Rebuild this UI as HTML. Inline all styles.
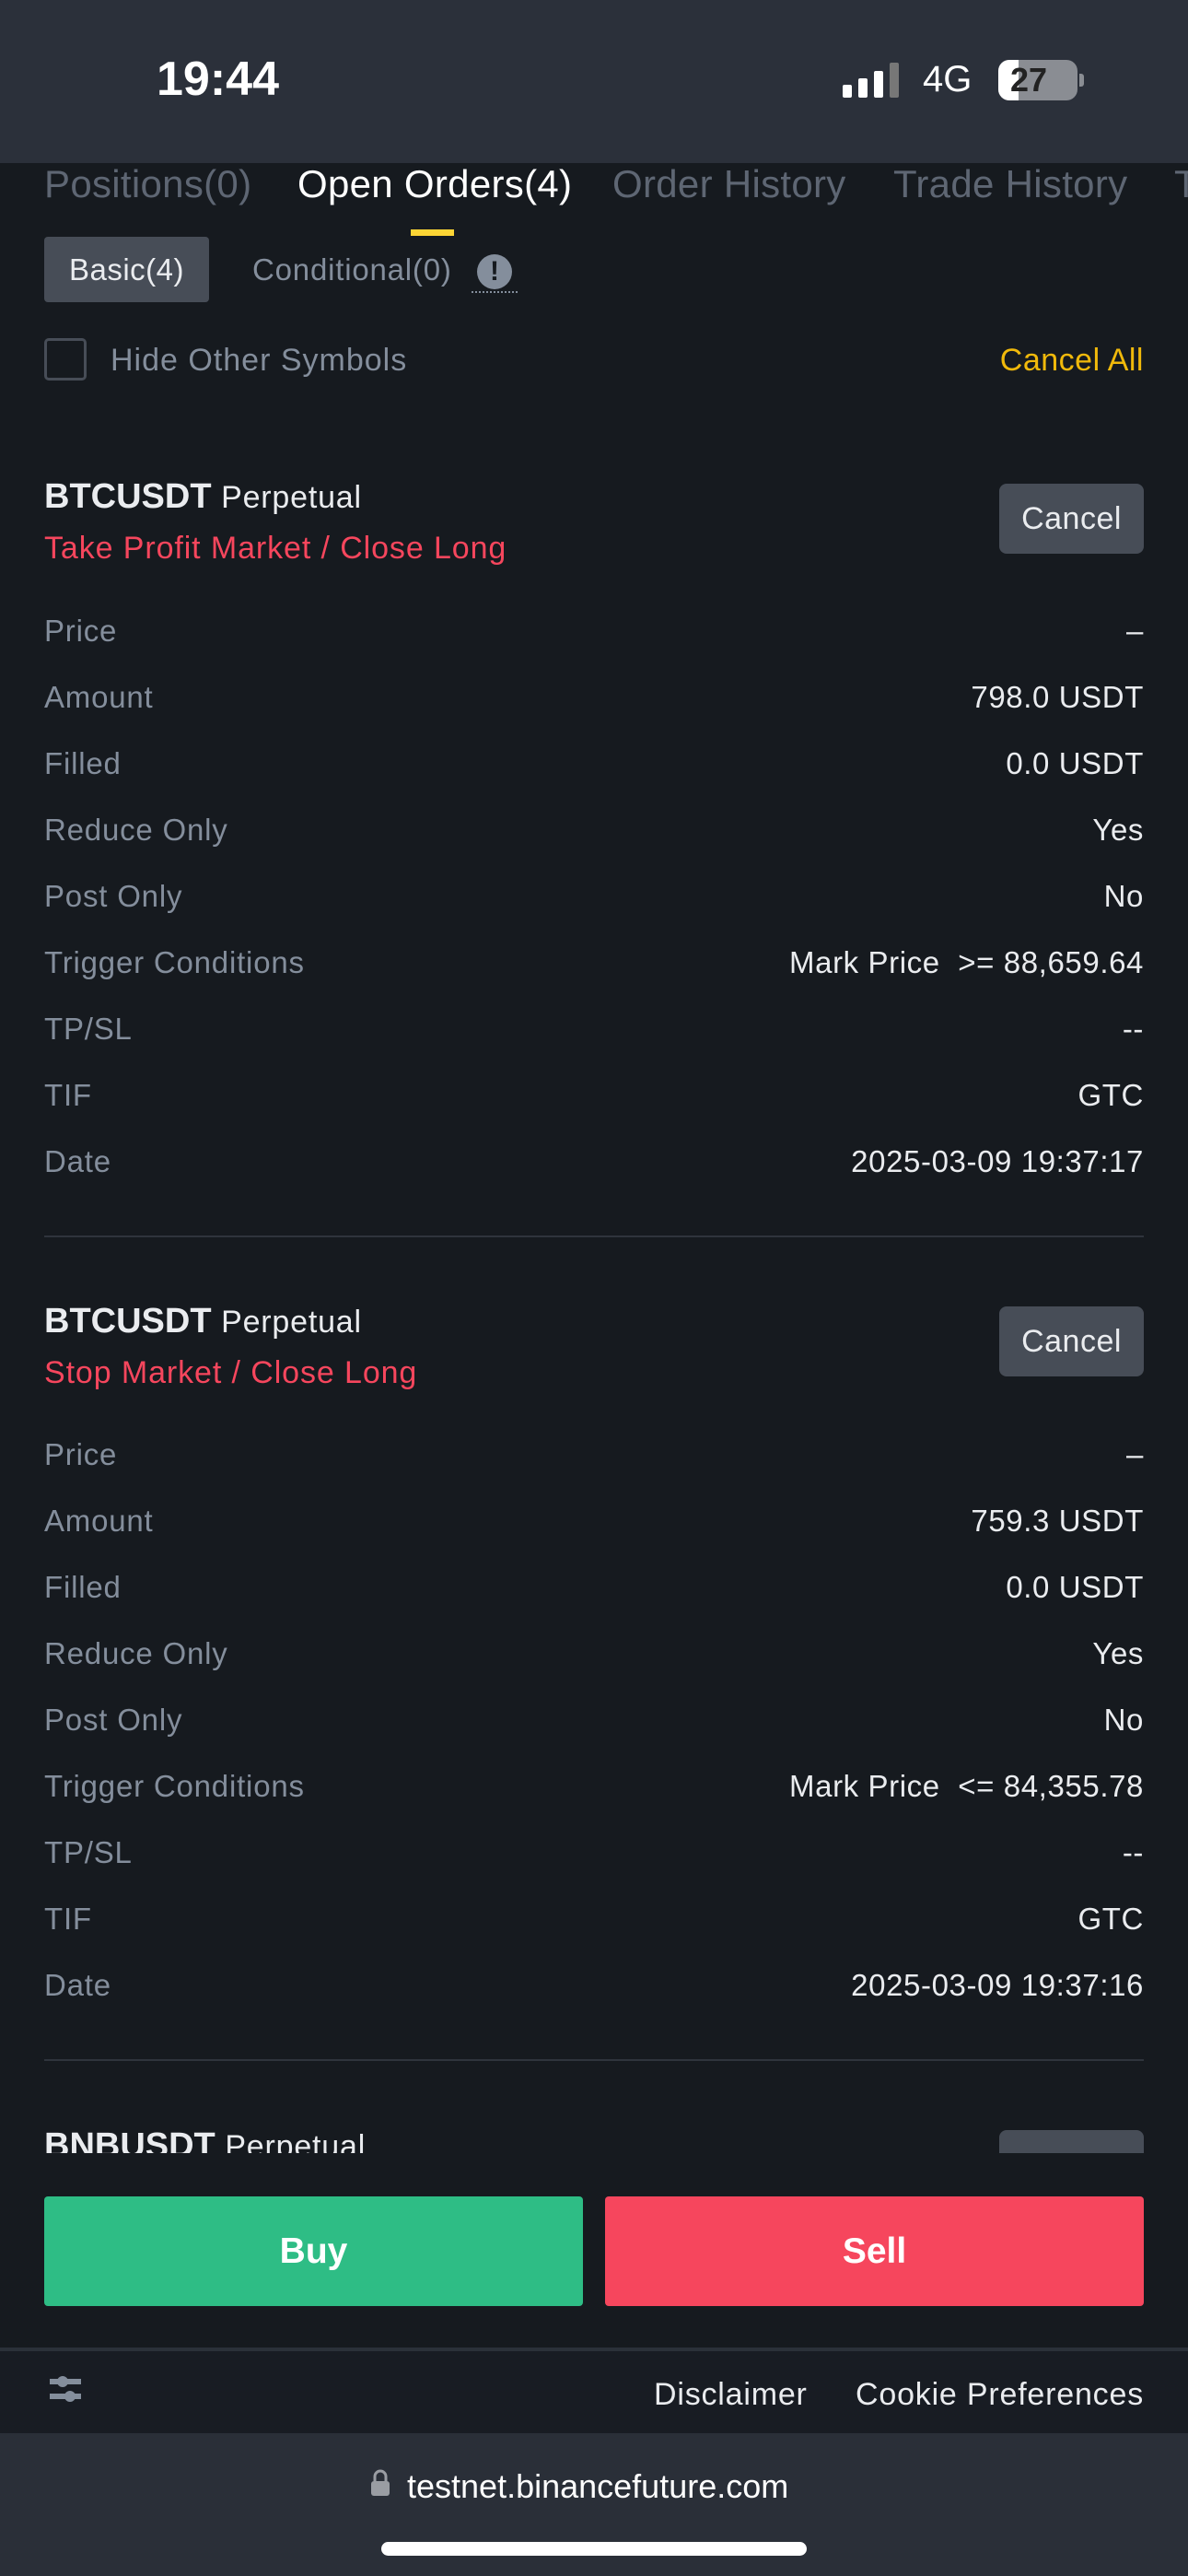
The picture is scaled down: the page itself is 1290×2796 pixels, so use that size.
<!DOCTYPE html>
<html><head><meta charset="utf-8"><style>
*{margin:0;padding:0;box-sizing:border-box}
body{width:1290px;height:2796px;background:#161a1f;font-family:"Liberation Sans",sans-serif;position:relative;overflow:hidden;color:#eaecef}
.a{position:absolute;white-space:nowrap}
.g{color:#848e9c}
.lbl{font-size:33px;color:#848e9c;left:48px;letter-spacing:0.8px}
.val{font-size:33px;color:#eaecef;right:48px;text-align:right;letter-spacing:0.6px}
.btn{position:absolute;background:#474d57;border-radius:8px;color:#eaecef;font-size:34px;display:flex;align-items:center;justify-content:center;letter-spacing:0.5px}
</style></head><body>
<div class="a" style="left:0;top:0;width:1290px;height:177px;background:#2b303a"></div>
<div class="a" style="left:170px;top:56px;font-size:52px;font-weight:bold;color:#fff">19:44</div>
<svg class="a" style="left:913px;top:68px" width="70" height="40"><rect x="2" y="24" width="10" height="14" rx="2" fill="#fff"/><rect x="19" y="17" width="10" height="21" rx="2" fill="#fff"/><rect x="36" y="9" width="10" height="29" rx="2" fill="#fff"/><rect x="53" y="0" width="10" height="38" rx="2" fill="#777"/></svg>
<div class="a" style="left:1002px;top:64px;font-size:40px;color:#fff">4G</div>
<div class="a" style="left:1084px;top:65px;width:86px;height:44px;border-radius:12px;background:#8a8d93;overflow:hidden"><div style="width:22px;height:44px;background:#fff"></div></div>
<div class="a" style="left:1097px;top:66px;font-size:36px;font-weight:bold;color:#222">27</div>
<div class="a" style="left:1172px;top:80px;width:5px;height:14px;background:#8a8d93;border-radius:0 3px 3px 0"></div>

<div class="a" style="left:48px;top:176px;font-size:42px;color:#5e6673;letter-spacing:0.3px">Positions(0)</div>
<div class="a" style="left:323px;top:176px;font-size:42px;color:#fff;letter-spacing:0.3px">Open Orders(4)</div>
<div class="a" style="left:665px;top:176px;font-size:42px;color:#5e6673;letter-spacing:0.3px">Order History</div>
<div class="a" style="left:970px;top:176px;font-size:42px;color:#5e6673;letter-spacing:0.3px">Trade History</div>
<div class="a" style="left:1275px;top:176px;font-size:42px;color:#5e6673">T</div>
<div class="a" style="left:446px;top:249px;width:47px;height:7px;background:#fcd535"></div>

<div class="btn" style="left:48px;top:257px;width:179px;height:71px;font-size:33px;border-radius:4px">Basic(4)</div>
<div class="a g" style="left:274px;top:274px;font-size:33px;letter-spacing:0.8px">Conditional(0)</div>
<div class="a" style="left:518px;top:276px;width:38px;height:38px;border-radius:50%;background:#848e9c;color:#161a1f;font-weight:bold;font-size:30px;text-align:center;line-height:38px">!</div>
<div class="a" style="left:512px;top:316px;width:50px;border-top:2px dotted #848e9c"></div>

<div class="a" style="left:48px;top:367px;width:46px;height:46px;border:3px solid #474d57;border-radius:5px"></div>
<div class="a g" style="left:120px;top:372px;font-size:34px;letter-spacing:1px">Hide Other Symbols</div>
<div class="a" style="right:48px;top:372px;font-size:34px;color:#f0b90b;letter-spacing:0.5px">Cancel All</div>

<div class="a" style="left:48px;top:518px;font-size:38px;font-weight:bold">BTCUSDT <span style="font-weight:normal;font-size:34px;letter-spacing:0.8px">Perpetual</span></div>
<div class="a" style="left:48px;top:576px;font-size:34px;color:#f6465d;letter-spacing:0.9px">Take Profit Market / Close Long</div>
<div class="btn" style="left:1085px;top:525px;width:157px;height:76px">Cancel</div>

<div class="a lbl" style="top:666px">Price</div><div class="a val" style="top:666px">–</div>
<div class="a lbl" style="top:738px">Amount</div><div class="a val" style="top:738px">798.0 USDT</div>
<div class="a lbl" style="top:810px">Filled</div><div class="a val" style="top:810px">0.0 USDT</div>
<div class="a lbl" style="top:882px">Reduce Only</div><div class="a val" style="top:882px">Yes</div>
<div class="a lbl" style="top:954px">Post Only</div><div class="a val" style="top:954px">No</div>
<div class="a lbl" style="top:1026px">Trigger Conditions</div><div class="a val" style="top:1026px">Mark Price &nbsp;&gt;= 88,659.64</div>
<div class="a lbl" style="top:1098px">TP/SL</div><div class="a val" style="top:1098px">--</div>
<div class="a lbl" style="top:1170px">TIF</div><div class="a val" style="top:1170px">GTC</div>
<div class="a lbl" style="top:1242px">Date</div><div class="a val" style="top:1242px">2025-03-09 19:37:17</div>
<div class="a" style="left:48px;top:1341px;width:1194px;height:2px;background:#2f343c"></div>

<div class="a" style="left:48px;top:1413px;font-size:38px;font-weight:bold">BTCUSDT <span style="font-weight:normal;font-size:34px;letter-spacing:0.8px">Perpetual</span></div>
<div class="a" style="left:48px;top:1471px;font-size:34px;color:#f6465d;letter-spacing:0.9px">Stop Market / Close Long</div>
<div class="btn" style="left:1085px;top:1418px;width:157px;height:76px">Cancel</div>

<div class="a lbl" style="top:1560px">Price</div><div class="a val" style="top:1560px">–</div>
<div class="a lbl" style="top:1632px">Amount</div><div class="a val" style="top:1632px">759.3 USDT</div>
<div class="a lbl" style="top:1704px">Filled</div><div class="a val" style="top:1704px">0.0 USDT</div>
<div class="a lbl" style="top:1776px">Reduce Only</div><div class="a val" style="top:1776px">Yes</div>
<div class="a lbl" style="top:1848px">Post Only</div><div class="a val" style="top:1848px">No</div>
<div class="a lbl" style="top:1920px">Trigger Conditions</div><div class="a val" style="top:1920px">Mark Price &nbsp;&lt;= 84,355.78</div>
<div class="a lbl" style="top:1992px">TP/SL</div><div class="a val" style="top:1992px">--</div>
<div class="a lbl" style="top:2064px">TIF</div><div class="a val" style="top:2064px">GTC</div>
<div class="a lbl" style="top:2136px">Date</div><div class="a val" style="top:2136px">2025-03-09 19:37:16</div>
<div class="a" style="left:48px;top:2235px;width:1194px;height:2px;background:#2f343c"></div>

<div class="a" style="left:0;top:2300px;width:1290px;height:37px;overflow:hidden">
<div class="a" style="left:48px;top:8px;font-size:38px;font-weight:bold">BNBUSDT <span style="font-weight:normal;font-size:34px;letter-spacing:0.8px">Perpetual</span></div>
<div class="btn" style="left:1085px;top:12px;width:157px;height:76px"></div>
</div>

<div class="a" style="left:48px;top:2384px;width:585px;height:119px;background:#2ebd85;border-radius:4px;color:#fff;font-size:39px;font-weight:bold;text-align:center;line-height:119px">Buy</div>
<div class="a" style="left:657px;top:2384px;width:585px;height:119px;background:#f6465d;border-radius:4px;color:#fff;font-size:39px;font-weight:bold;text-align:center;line-height:119px">Sell</div>

<div class="a" style="left:0;top:2548px;width:1290px;height:4px;background:#2b3139"></div>
<div class="a" style="left:0;top:2552px;width:1290px;height:89px;background:#181c23"></div>
<svg class="a" style="left:52px;top:2574px" width="40" height="40"><rect x="2" y="8" width="34" height="6" fill="#848e9c"/><circle cx="16" cy="11" r="6" fill="#848e9c"/><rect x="2" y="24" width="34" height="6" fill="#848e9c"/><circle cx="24" cy="27" r="6" fill="#848e9c"/></svg>
<div class="a" style="left:710px;top:2580px;font-size:34px;color:#eaecef;letter-spacing:0.8px">Disclaimer</div>
<div class="a" style="right:48px;top:2580px;font-size:34px;color:#eaecef;letter-spacing:0.8px">Cookie Preferences</div>

<div class="a" style="left:0;top:2641px;width:1290px;height:155px;background:#2a2f38"></div>
<svg class="a" style="left:402px;top:2680px" width="22" height="30"><path d="M5 13V8a6 6 0 0 1 12 0v5" stroke="#9a9da3" stroke-width="3" fill="none"/><rect x="1" y="13" width="20" height="16" rx="3" fill="#9a9da3"/></svg>
<div class="a" style="left:442px;top:2678px;font-size:36px;color:#fff">testnet.binancefuture.com</div>
<div class="a" style="left:414px;top:2759px;width:462px;height:15px;border-radius:8px;background:#fff"></div>
</body></html>
